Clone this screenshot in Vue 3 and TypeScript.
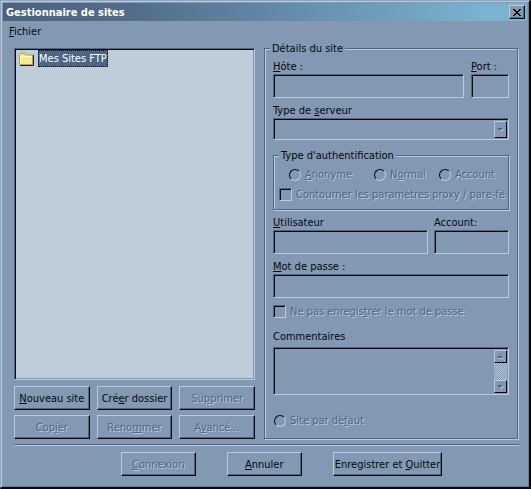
<script setup lang="ts">
import { ref } from 'vue'

interface Caption {
  before: string
  key: string
  after: string
  disabled: boolean
}

const siteActions: Caption[] = [
  { before: '', key: 'N', after: 'ouveau site', disabled: false },
  { before: 'Cré', key: 'e', after: 'r dossier', disabled: false },
  { before: 'Su', key: 'p', after: 'primer', disabled: true },
  { before: 'Cop', key: 'i', after: 'er', disabled: true },
  { before: 'Reno', key: 'm', after: 'mer', disabled: true },
  { before: 'A', key: 'v', after: 'ancé...', disabled: true },
]

const dialogActions: Caption[] = [
  { before: '', key: 'C', after: 'onnexion', disabled: true },
  { before: '', key: 'A', after: 'nnuler', disabled: false },
  { before: 'Enregistrer et ', key: 'Q', after: 'uitter', disabled: false },
]

const authModes: Caption[] = [
  { before: '', key: 'A', after: 'nonyme', disabled: true },
  { before: 'N', key: 'o', after: 'rmal', disabled: true },
  { before: 'Account', key: '', after: '', disabled: true },
]

const host = ref('')
const port = ref('')
const user = ref('')
const account = ref('')
const password = ref('')
const comments = ref('')
</script>

<template>
  <div class="window">
    <header class="titlebar">
      <h1>Gestionnaire de sites</h1>
      <button class="close" type="button" aria-label="Fermer">
        <svg width="8" height="7" viewBox="0 0 8 7" shape-rendering="crispEdges">
          <path d="M0 0h2v1h1v1h2v-1h1v-1h2v1h-1v1h-1v1h-1v1h1v1h1v1h1v1h-2v-1h-1v-1h-2v1h-1v1h-2v-1h1v-1h1v-1h1v-1h-1v-1h-1v-1h-1z" />
        </svg>
      </button>
    </header>

    <nav class="menu"><a href="#"><u>F</u>ichier</a></nav>

    <main class="body">
      <section class="sites">
        <ul class="tree">
          <li>
            <svg width="16" height="14" viewBox="0 0 16 14">
              <path d="M1 13.5h13.5V3" fill="none" stroke="#20252a" />
              <path d="M.5 12.5V2.5l1-1h4l1 1.500h7v9.500z" fill="#f6ea8c" stroke="#b5a443" />
              <path d="M1.500 11.500V4.500h11" fill="none" stroke="#fffbd0" />
            </svg>
            <button type="button" class="node">Mes Sites FTP</button>
          </li>
        </ul>
        <div class="actions">
          <button v-for="(a, i) in siteActions" :key="i" type="button" class="push" :disabled="a.disabled">
            {{ a.before }}<u>{{ a.key }}</u>{{ a.after }}
          </button>
        </div>
      </section>

      <fieldset class="frame details">
        <legend>Détails du site</legend>

        <div class="row host-row">
          <div class="field">
            <label for="host"><u>H</u>ôte :</label>
            <input id="host" v-model="host" type="text" class="sunken" disabled />
          </div>
          <div class="field">
            <label for="port"><u>P</u>ort :</label>
            <input id="port" v-model="port" type="text" class="sunken" disabled />
          </div>
        </div>

        <div class="field server">
          <label for="server">Type de <u>s</u>erveur</label>
          <div class="combo sunken">
            <select id="server" disabled><option></option></select>
            <span class="arrow">
              <svg width="7" height="4" viewBox="0 0 7 4"><path d="M1 1h6L4 4z" fill="#b9cad9" /><path d="M0 0h6L3 3z" fill="#4d6684" /></svg>
            </span>
          </div>
        </div>

        <fieldset class="frame auth">
          <legend>Type d'authentification</legend>
          <div class="modes">
            <label v-for="(m, i) in authModes" :key="i" class="choice">
              <input type="radio" name="auth" disabled />
              <span>{{ m.before }}<u>{{ m.key }}</u>{{ m.after }}</span>
            </label>
          </div>
          <label class="choice">
            <input type="checkbox" disabled />
            <span>Contourner les paramètres proxy / pare-feu</span>
          </label>
        </fieldset>

        <div class="row user-row">
          <div class="field">
            <label for="user"><u>U</u>tilisateur</label>
            <input id="user" v-model="user" type="text" class="sunken" disabled />
          </div>
          <div class="field">
            <label for="account">Account:</label>
            <input id="account" v-model="account" type="text" class="sunken" disabled />
          </div>
        </div>

        <div class="field secret">
          <label for="password"><u>M</u>ot de passe :</label>
          <input id="password" v-model="password" type="password" class="sunken" disabled />
        </div>

        <label class="choice nosave">
          <input type="checkbox" disabled />
          <span>Ne pas enregis<u>t</u>rer le mot de passe.</span>
        </label>

        <div class="field notes">
          <label for="comments">Commentaires</label>
          <div class="memo sunken">
            <textarea id="comments" v-model="comments" disabled></textarea>
            <div class="scroll">
              <span class="arrow">
                <svg width="7" height="4" viewBox="0 0 7 4"><path d="M1 4h6L4 1z" fill="#b9cad9" /><path d="M0 3h6L3 0z" fill="#4d6684" /></svg>
              </span>
              <span class="arrow">
                <svg width="7" height="4" viewBox="0 0 7 4"><path d="M1 1h6L4 4z" fill="#b9cad9" /><path d="M0 0h6L3 3z" fill="#4d6684" /></svg>
              </span>
            </div>
          </div>
        </div>

        <label class="choice default">
          <input type="radio" name="default" disabled />
          <span>Site par dé<u>f</u>aut</span>
        </label>
      </fieldset>
    </main>

    <footer class="footer">
      <button v-for="(a, i) in dialogActions" :key="i" type="button" class="push" :disabled="a.disabled">
        {{ a.before }}<u>{{ a.key }}</u>{{ a.after }}
      </button>
    </footer>
  </div>
</template>

<style>
body {
  background: #8399b3;
}
</style>

<style scoped>
.window {
  --face: #8399b3;
  --light: #bacbdc;
  --shade: #4d6684;
  --ink: #05080c;
  box-sizing: border-box;
  min-height: 100vh;
  display: flex;
  flex-direction: column;
  padding: 1px;
  border: solid;
  border-width: 1px 2px 2px 1px;
  border-color: #90a5bc var(--ink) var(--ink) #90a5bc;
  box-shadow: inset 1px 1px 0 var(--light), inset -1px -1px 0 #677f9b;
  background: var(--face);
  color: var(--ink);
  font: 11px/13px "DejaVu Sans Condensed", "DejaVu Sans", sans-serif;
  font-stretch: condensed;
}
.window *,
.window *::before {
  box-sizing: border-box;
}
u {
  text-underline-offset: 1px;
  text-decoration-thickness: 1px;
}
button,
input,
select,
textarea {
  margin: 0;
  font: inherit;
  color: inherit;
}

.titlebar {
  display: flex;
  align-items: center;
  justify-content: space-between;
  height: 18px;
  margin: 1px;
  padding: 0 2px 0 3px;
  background: linear-gradient(90deg, #4a6280 0%, #526d8b 25%, #7ab2d1 92%);
}
h1 {
  margin: 0;
  color: #fff;
  font-size: 11px;
  font-weight: 700;
}
.close {
  display: grid;
  place-items: center;
  width: 16px;
  height: 14px;
  padding: 0;
  background: var(--face);
  border: 1px solid;
  border-color: var(--light) var(--ink) var(--ink) var(--light);
  box-shadow: inset -1px -1px 0 var(--shade);
}

.menu {
  height: 20px;
  padding: 3px 7px;
}
.menu a {
  color: inherit;
  text-decoration: none;
}

.body {
  flex: 1;
  display: grid;
  grid-template-columns: 241fr 254fr;
  gap: 9px;
  padding: 0 10px 0 12px;
}
.sites {
  display: flex;
  flex-direction: column;
  gap: 6px;
  padding-top: 6px;
}
.tree {
  flex: 1;
  margin: 0;
  padding: 1px 4px;
  list-style: none;
  background: #bfccd9;
  border: 1px solid;
  border-color: var(--shade) var(--light) var(--light) var(--shade);
  box-shadow: inset 1px 1px 0 var(--ink), inset -1px -1px 0 var(--face);
}
.tree li {
  display: flex;
  align-items: center;
  gap: 3px;
}
.node {
  padding: 1px 0;
  color: #fff;
  background: var(--shade);
  border: 1px dotted var(--ink);
}
.actions {
  display: grid;
  grid-template-columns: repeat(3, 1fr);
  gap: 5px 7px;
}

.push {
  height: 24px;
  min-width: 75px;
  padding: 0 1px;
  white-space: nowrap;
  background: var(--face);
  border: 1px solid;
  border-color: var(--light) var(--ink) var(--ink) var(--light);
  box-shadow: inset -1px -1px 0 var(--shade);
}
.push:disabled,
.choice {
  color: var(--shade);
  text-shadow: 1px 1px 0 var(--light);
}

.frame {
  min-width: 0;
  margin: 0;
  border: 1px solid var(--shade);
  box-shadow: 1px 1px 0 var(--light), inset 1px 1px 0 var(--light);
}
legend {
  padding: 0 2px;
  background: var(--face);
}
.details {
  padding: 5px 8px 8px 8px;
}
.details > legend {
  margin-left: -3px;
}
.row {
  display: grid;
}
.host-row {
  grid-template-columns: 1fr 38px;
  gap: 7px;
}
.user-row {
  grid-template-columns: 155fr 75fr;
  gap: 6px;
  margin-top: 6px;
}
.field {
  display: flex;
  flex-direction: column;
  gap: 1px;
  min-width: 0;
}
.sunken {
  width: 100%;
  height: 24px;
  padding: 0 3px;
  border-radius: 0;
  background: var(--face);
  border: 1px solid;
  border-color: var(--shade) var(--light) var(--light) var(--shade);
  box-shadow: inset 1px 1px 0 var(--ink);
}
.server {
  margin-top: 6px;
}
.combo,
.memo {
  display: flex;
  padding: 2px 1px 1px 2px;
}
.combo {
  height: 22px;
}
select,
textarea {
  flex: 1;
  min-width: 0;
  padding: 0;
  appearance: none;
  border: 0;
  resize: none;
  background: transparent;
}
.arrow {
  display: grid;
  place-items: center;
  width: 13px;
  min-height: 13px;
  background: var(--face);
  border: 1px solid;
  border-color: var(--light) var(--ink) var(--ink) var(--light);
}
.memo {
  height: 48px;
}
.scroll {
  display: flex;
  flex-direction: column;
  justify-content: space-between;
  background: repeating-conic-gradient(#b7c8d9 0 25%, #8399b3 0 50%) 0 0 / 2px 2px;
}

.auth {
  margin-top: 9px;
  padding: 6px 2px 8px 5px;
}
.auth > legend {
  margin-left: 0;
}
.modes {
  display: grid;
  grid-template-columns: 85px 65px 1fr;
  margin: 0 0 7px 10px;
}
.choice {
  display: flex;
  align-items: center;
  gap: 4px;
  height: 13px;
  overflow: hidden;
  white-space: nowrap;
}
.choice span {
  line-height: 15px;
}
.choice input {
  flex: none;
  appearance: none;
  border: 1px solid;
}
.choice input[type='checkbox'] {
  width: 13px;
  height: 13px;
  border-color: var(--shade) var(--light) var(--light) var(--shade);
  box-shadow: inset 1px 1px 0 var(--ink);
}
.choice input[type='radio'] {
  width: 12px;
  height: 12px;
  border-color: var(--ink) var(--light) var(--light) var(--ink);
  border-radius: 50%;
}
.secret {
  margin-top: 6px;
}
.nosave {
  margin-top: 7px;
}
.notes {
  margin-top: 12px;
  gap: 4px;
}
.default {
  margin-top: 19px;
  padding-left: 1px;
}

.footer {
  display: flex;
  justify-content: center;
  gap: 31px;
  margin: 5px 9px 0 12px;
  padding: 7px 0 10px 30px;
  border-top: 1px solid var(--shade);
  box-shadow: inset 0 1px 0 var(--light);
}
</style>
